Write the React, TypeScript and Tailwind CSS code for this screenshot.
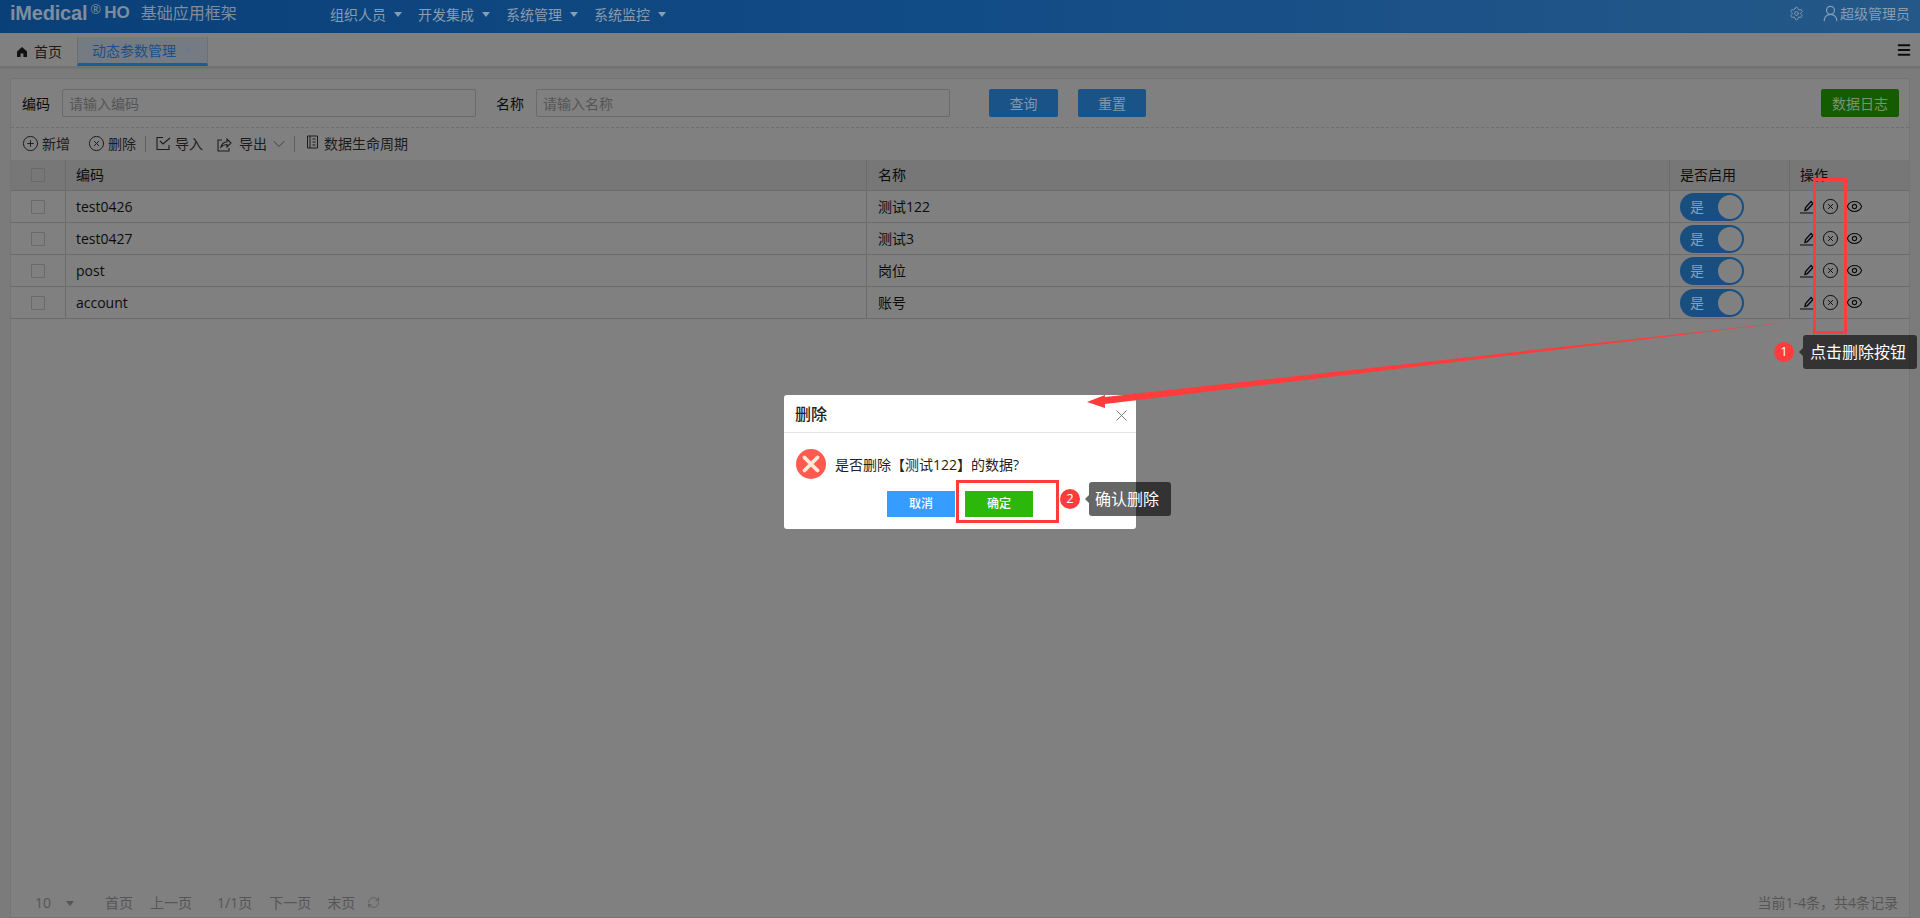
import { CirclePlus, CircleX, Eye, ChevronDown, RefreshCw, Settings, UserRound, X, Menu } from "lucide-react";

const rows = [
  { code: "test0426", name: "测试122" },
  { code: "test0427", name: "测试3" },
  { code: "post", name: "岗位" },
  { code: "account", name: "账号" },
];

const navItems = ["组织人员", "开发集成", "系统管理", "系统监控"];

const cols = "grid grid-cols-[55px_801px_803px_120px_1fr]";

function Caret({ className }: { className: string }) {
  return <span className={`inline-block w-0 h-0 border-x-[4px] border-x-transparent border-t-[5px] ${className}`} />;
}

function Toggle() {
  return (
    <div className="w-[64px] h-[28px] rounded-full bg-[#194e80] flex items-center justify-between pl-[10px] pr-[2px]">
      <span className="text-[14px] text-[#8a9fb3]">是</span>
      <span className="w-[24px] h-[24px] rounded-full bg-[#808080]" />
    </div>
  );
}

function EditIcon() {
  return (
    <svg width="14" height="15" viewBox="0 0 14 15" fill="none" stroke="#0c0c0c" strokeWidth="1.4">
      <path d="M5 11.5l.6-3L11 2.6l2 2-5.6 6z" />
      <path d="M0 14h13" strokeWidth="1" />
    </svg>
  );
}

export default function App() {
  return (
    <div
      className="relative w-[1920px] h-[918px] overflow-hidden bg-[#7b7b7b] text-[14px] text-[#0c0c0c] flex flex-col"
      style={{ fontFamily: '"Open Sans", "Noto Sans CJK SC", sans-serif' }}
    >
      <header className="h-[33px] shrink-0 flex items-center bg-gradient-to-r from-[#0a4078] via-[#124c86] to-[#245888] text-[#8a9db0] pl-[10px] pr-[10px]">
        <div className="flex items-center w-[320px] -mt-[7px] text-[#7f8e9d]">
          <span className="text-[20px] font-bold tracking-[-0.2px]" style={{ fontFamily: '"Liberation Sans", sans-serif' }}>iMedical</span>
          <span className="text-[13px] -mt-[6px] ml-[3px]">®</span>
          <span className="text-[17px] font-bold ml-[3px]" style={{ fontFamily: '"Liberation Sans", sans-serif' }}>HO</span>
          <span className="text-[16px] ml-[11px]">基础应用框架</span>
        </div>
        <nav className="flex items-center gap-[16px] -mt-[4px]">
          {navItems.map((n) => (
            <span key={n} className="flex items-center gap-[8px] text-[14px]">
              {n}
              <Caret className="border-t-[#8a9db0]" />
            </span>
          ))}
        </nav>
        <div className="ml-auto flex items-center -mt-[6px]">
          <Settings size={15} strokeWidth={1.5} />
          <UserRound size={19} strokeWidth={1.5} className="ml-[17px]" />
          <span className="text-[14px]">超级管理员</span>
        </div>
      </header>

      <div className="h-[34px] shrink-0 flex items-end bg-[#808080] border-b border-[#747474] pl-[17px] pr-[8px] shadow-[0_1px_2px_rgba(0,0,0,0.15)]">
        <div className="h-[29px] flex items-center gap-[7px] w-[60px] text-[#1a1a1a]">
          <svg width="10" height="10" viewBox="0 0 10 10" fill="#111">
            <path d="M5 0L0 4.6V10h3.6V6.5h2.8V10H10V4.6z" />
          </svg>
          <span>首页</span>
        </div>
        <div className="h-[29px] w-[131px] flex items-center justify-center gap-[7px] bg-[#747b83] border-x border-[#6c7076] border-b-[3px] border-b-[#1c5c98] text-[#1a4f8a]">
          <span>动态参数管理</span>
          <X size={10} className="text-[#5f7a94]" />
        </div>
        <Menu size={16} strokeWidth={3} className="ml-auto mb-[8px] text-[#0c0c0c]" />
      </div>

      <main className="flex-1 min-h-0 mt-[11px] ml-[10px] mr-[10px] bg-[#808080] border border-[#747474] rounded-t-[3px] flex flex-col">
        <div className="h-[49px] shrink-0 border-b border-dashed border-[#6f6f6f] flex items-center pl-[11px] pr-[10px]">
          <span className="w-[40px]">编码</span>
          <div className="w-[414px] h-[28px] border border-[#6a6a6a] rounded-[2px] flex items-center px-[6px] text-[#555]">请输入编码</div>
          <span className="ml-[20px] w-[40px]">名称</span>
          <div className="w-[414px] h-[28px] border border-[#6a6a6a] rounded-[2px] flex items-center px-[6px] text-[#555]">请输入名称</div>
          <button className="ml-[39px] w-[69px] h-[28px] rounded-[2px] bg-[#195388] text-[#8097ad]">查询</button>
          <button className="ml-[20px] w-[68px] h-[28px] rounded-[2px] bg-[#195388] text-[#8097ad]">重置</button>
          <button className="ml-auto w-[78px] h-[28px] rounded-[2px] bg-[#155c00] text-[#7b9470]">数据日志</button>
        </div>

        <div className="h-[32px] shrink-0 flex items-center pl-[11px] pb-[1px] text-[#1c1c1c]">
          <CirclePlus size={17} strokeWidth={1.4} />
          <span className="ml-[3px]">新增</span>
          <CircleX size={17} strokeWidth={1.4} className="ml-[18px]" />
          <span className="ml-[3px]">删除</span>
          <span className="ml-[9px] w-px h-[16px] bg-[#5f5f5f]" />
          <svg width="15" height="15" viewBox="0 0 15 15" fill="none" stroke="#1c1c1c" strokeWidth="1.1" className="ml-[10px]">
            <path d="M7 1.5H1v12h12V9" />
            <path d="M4 5l3 3 7-6" />
          </svg>
          <span className="ml-[4px]">导入</span>
          <svg width="15" height="15" viewBox="0 0 15 15" fill="none" stroke="#1c1c1c" strokeWidth="1.1" className="ml-[14px] mt-[2px]">
            <path d="M5 3H1v11h11v-3" />
            <path d="M4 10c1-4 3-5 6-5V2l4 4-4 4V7.5C8 7.5 6 8 4 10z" />
          </svg>
          <span className="ml-[7px]">导出</span>
          <ChevronDown size={20} strokeWidth={0.8} className="ml-[2px]" />
          <span className="ml-[5px] w-px h-[16px] bg-[#5f5f5f]" />
          <svg width="13" height="14" viewBox="0 0 13 14" fill="none" stroke="#1c1c1c" strokeWidth="1" className="ml-[11px] -mt-[3px]">
            <path d="M1.5 1h10v12h-10zM4 1v12M6.5 4h3M6.5 7h3M6.5 10h3" />
          </svg>
          <span className="ml-[5px]">数据生命周期</span>
        </div>

        <div className={`${cols} h-[31px] shrink-0 bg-[#777] border-b border-[#6c6c6c]`}>
          <div className="border-r border-[#6c6c6c] flex items-center justify-center">
            <span className="w-[14px] h-[14px] border border-[#6a6a6a] rounded-[1px]" />
          </div>
          <div className="border-r border-[#6c6c6c] flex items-center pl-[10px] pb-[1px]">编码</div>
          <div className="border-r border-[#6c6c6c] flex items-center pl-[11px] pb-[1px]">名称</div>
          <div className="border-r border-[#6c6c6c] flex items-center pl-[10px] pb-[1px]">是否启用</div>
          <div className="flex items-center pl-[10px] pb-[1px]">操作</div>
        </div>

        {rows.map((r) => (
          <div key={r.code} className={`${cols} h-[32px] shrink-0 border-b border-[#6c6c6c]`}>
            <div className="border-r border-[#6c6c6c] flex items-center justify-center">
              <span className="w-[14px] h-[14px] border border-[#6a6a6a] rounded-[1px]" />
            </div>
            <div className="border-r border-[#6c6c6c] flex items-center pl-[10px]">{r.code}</div>
            <div className="border-r border-[#6c6c6c] flex items-center pl-[11px]">{r.name}</div>
            <div className="border-r border-[#6c6c6c] flex items-center pl-[10px]">
              <Toggle />
            </div>
            <div className="flex items-center pl-[10px]">
              <EditIcon />
              <CircleX size={17} strokeWidth={1.4} className="ml-[8px]" />
              <Eye size={17} strokeWidth={1.5} className="ml-[7px]" />
            </div>
          </div>
        ))}

        <footer className="mt-auto h-[28px] shrink-0 flex items-center pl-[24px] pr-[11px] text-[#555] pb-[1px]">
          <span>10</span>
          <Caret className="ml-[15px] border-t-[#555] mt-[2px]" />
          <span className="ml-[31px]">首页</span>
          <span className="ml-[17px]">上一页</span>
          <span className="ml-[25px]">1/1页</span>
          <span className="ml-[17px]">下一页</span>
          <span className="ml-[16px]">末页</span>
          <RefreshCw size={13} strokeWidth={1.4} className="ml-[12px]" />
          <span className="ml-auto">当前1-4条，共4条记录</span>
        </footer>
      </main>

      {/* dialog */}
      <div className="absolute left-[784px] top-[395px] w-[352px] h-[134px] bg-white rounded-[3px] flex flex-col">
        <div className="h-[38px] shrink-0 border-b border-[#e4e4e4] flex items-center justify-between pl-[11px] pr-[5px]">
          <span className="text-[16px] font-medium text-[#222]">删除</span>
          <X size={19} strokeWidth={1.2} className="text-[#777] mt-[3px]" />
        </div>
        <div className="flex items-center pl-[12px] pt-[16px]">
          <span className="w-[30px] h-[30px] rounded-full bg-[#ff5a50] flex items-center justify-center">
            <X size={26} strokeWidth={3.5} className="text-[#ffe9d6]" />
          </span>
          <span className="ml-[9px] text-[#222]">是否删除【测试122】的数据?</span>
        </div>
        <div className="flex pl-[103px] pt-[12px] gap-[10px] text-[12px] font-medium text-white">
          <button className="w-[68px] h-[26px] bg-[#349dff]">取消</button>
          <button className="w-[68px] h-[26px] bg-[#2cb80a]">确定</button>
        </div>
      </div>

      {/* annotations */}
      <span className="absolute left-[1813px] top-[178px] w-[34px] h-[156px] border-[3px] border-[#ff3b3b]" />
      <span className="absolute left-[956px] top-[480px] w-[103px] h-[43px] border-[3px] border-[#ff3b3b]" />
      <svg className="absolute left-0 top-0 pointer-events-none" width="1920" height="918">
        <polygon points="1790,322 1105,397 1105,395 1087,402 1105,408 1105,404" fill="#ff3b3b" />
      </svg>

      <span className="absolute left-[1774px] top-[342px] w-[20px] h-[20px] rounded-full bg-[#ff3b3b] text-white text-[13px] flex items-center justify-center">1</span>
      <div className="absolute left-[1803px] top-[335px] w-[114px] h-[34px] rounded-[3px] bg-black/60 text-white text-[16px] flex items-center justify-center pr-[4px]">
        <span className="absolute left-[-4px] top-[13px] w-0 h-0 border-y-[4px] border-y-transparent border-r-[4px] border-r-black/60" />
        点击删除按钮
      </div>
      <span className="absolute left-[1060px] top-[489px] w-[20px] h-[20px] rounded-full bg-[#ff3b3b] text-white text-[13px] flex items-center justify-center">2</span>
      <div className="absolute left-[1089px] top-[482px] w-[82px] h-[34px] rounded-[3px] bg-black/60 text-white text-[16px] flex items-center justify-center pr-[6px]">
        <span className="absolute left-[-4px] top-[13px] w-0 h-0 border-y-[4px] border-y-transparent border-r-[4px] border-r-black/60" />
        确认删除
      </div>
    </div>
  );
}
